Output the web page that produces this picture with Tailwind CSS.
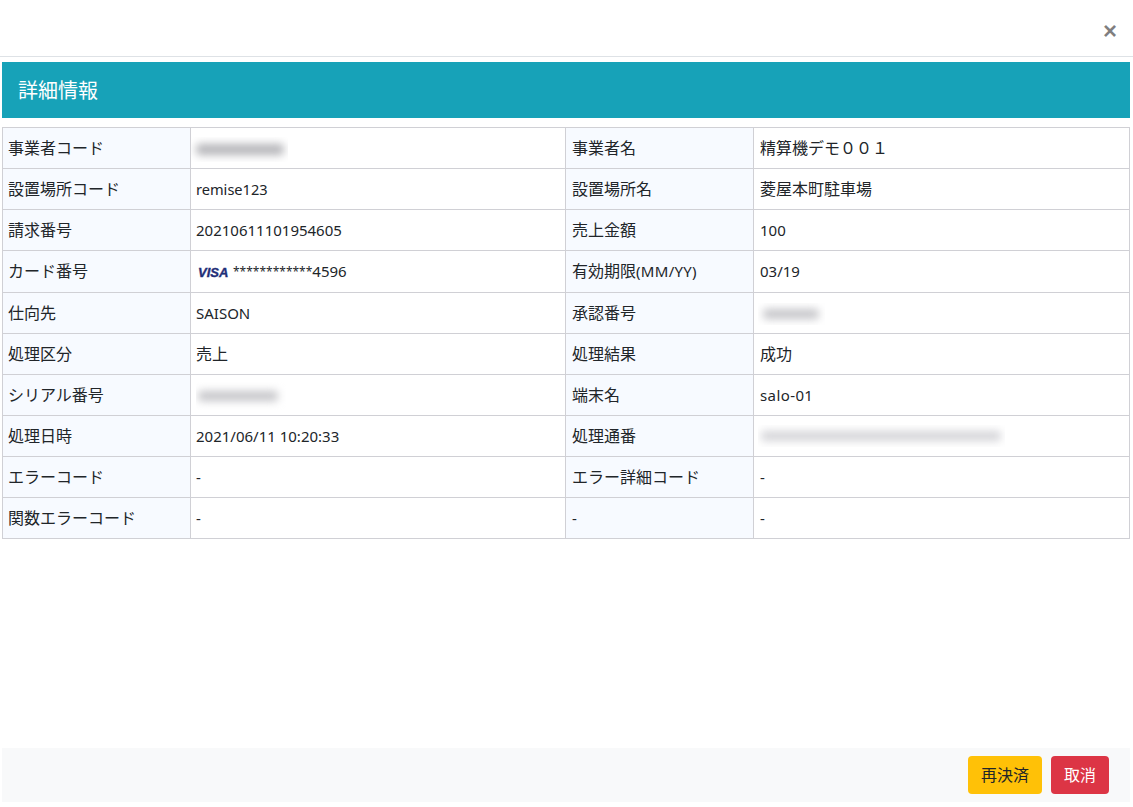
<!DOCTYPE html>
<html lang="ja">
<head>
<meta charset="utf-8">
<title>詳細情報</title>
<script src="https://cdn.jsdelivr.net/npm/@tailwindcss/browser@4"></script>
</head>
<body class="bg-white font-['Noto_Sans','Noto_Sans_CJK_JP',sans-serif] text-[16px] leading-[21px] text-[#212529]">
<div class="h-[807px] w-[1133px] flex flex-col overflow-hidden">
  <header class="h-[57px] shrink-0 border-b border-[#dee2e6] flex items-center justify-end pr-[16px]">
    <button class="text-[24px] leading-none font-bold text-black/50 pt-[6px] font-['Liberation_Sans',sans-serif]">×</button>
  </header>
  <main class="flex-1 pl-[2px] pr-[3px] pt-[5px] flex flex-col">
    <h2 class="h-[56px] bg-[#17a2b8] text-white text-[20px] flex items-center pl-[16px] font-normal">詳細情報</h2>
    <table class="mt-[9px] w-[1127px] table-fixed border-collapse border border-[#d0d0d5]">
      <colgroup>
        <col class="w-[188px]"><col class="w-[375px]"><col class="w-[188px]"><col class="w-[376px]">
      </colgroup>
      <tbody>
        <tr class="h-[41px]">
          <td class="border border-[#d0d0d5] bg-[#f7faff] px-[5px] align-middle">事業者コード</td>
          <td class="border border-[#d0d0d5] px-[5px] align-middle relative">
            <div class="absolute left-0 top-[9px] w-[97px] h-[25px] overflow-hidden bg-white"><div class="mt-[7px] ml-[5px] h-[11px] w-[88px] rounded bg-[#b4b4b8] blur-[4px]"></div></div>&nbsp;
          </td>
          <td class="border border-[#d0d0d5] bg-[#f7faff] pl-[6px] pr-[5px] align-middle">事業者名</td>
          <td class="border border-[#d0d0d5] pl-[6px] pr-[5px] align-middle">精算機デモ００１</td>
        </tr>
        <tr class="h-[41px]">
          <td class="border border-[#d0d0d5] bg-[#f7faff] px-[5px] align-middle">設置場所コード</td>
          <td class="border border-[#d0d0d5] px-[5px] align-middle text-[14.6px]">remise123</td>
          <td class="border border-[#d0d0d5] bg-[#f7faff] pl-[6px] pr-[5px] align-middle">設置場所名</td>
          <td class="border border-[#d0d0d5] pl-[6px] pr-[5px] align-middle">菱屋本町駐車場</td>
        </tr>
        <tr class="h-[41px]">
          <td class="border border-[#d0d0d5] bg-[#f7faff] px-[5px] align-middle">請求番号</td>
          <td class="border border-[#d0d0d5] px-[5px] align-middle text-[15px]">20210611101954605</td>
          <td class="border border-[#d0d0d5] bg-[#f7faff] pl-[6px] pr-[5px] align-middle">売上金額</td>
          <td class="border border-[#d0d0d5] pl-[6px] pr-[5px] align-middle text-[15px]">100</td>
        </tr>
        <tr class="h-[42px]">
          <td class="border border-[#d0d0d5] bg-[#f7faff] px-[5px] align-middle">カード番号</td>
          <td class="border border-[#d0d0d5] px-[5px] align-middle"><span class="inline-flex items-center gap-[5px] ml-[2px]"><span class="font-['Liberation_Sans',sans-serif] italic font-black text-[13px] leading-none text-[#1f2f78] [-webkit-text-stroke:0.4px_#1f2f78] w-[30px] pt-[2px]">VISA</span><span class="text-[15px]"><span class="text-[12px] align-[1px]">************</span>4596</span></span></td>
          <td class="border border-[#d0d0d5] bg-[#f7faff] pl-[6px] pr-[5px] align-middle">有効期限<span class="text-[15px] tracking-[0.3px]">(MM/YY)</span></td>
          <td class="border border-[#d0d0d5] pl-[6px] pr-[5px] align-middle text-[15px]">03/19</td>
        </tr>
        <tr class="h-[41px]">
          <td class="border border-[#d0d0d5] bg-[#f7faff] px-[5px] align-middle">仕向先</td>
          <td class="border border-[#d0d0d5] px-[5px] align-middle text-[15px]">SAISON</td>
          <td class="border border-[#d0d0d5] bg-[#f7faff] pl-[6px] pr-[5px] align-middle">承認番号</td>
          <td class="border border-[#d0d0d5] px-[5px] align-middle relative">
            <div class="absolute left-[4px] top-[10px] w-[67px] h-[22px] overflow-hidden bg-white"><div class="mt-[6px] ml-[5px] h-[10px] w-[56px] rounded bg-[#c4c4c8] blur-[4px]"></div></div>&nbsp;
          </td>
        </tr>
        <tr class="h-[41px]">
          <td class="border border-[#d0d0d5] bg-[#f7faff] px-[5px] align-middle">処理区分</td>
          <td class="border border-[#d0d0d5] px-[5px] align-middle">売上</td>
          <td class="border border-[#d0d0d5] bg-[#f7faff] pl-[6px] pr-[5px] align-middle">処理結果</td>
          <td class="border border-[#d0d0d5] pl-[6px] pr-[5px] align-middle">成功</td>
        </tr>
        <tr class="h-[41px]">
          <td class="border border-[#d0d0d5] bg-[#f7faff] px-[5px] align-middle">シリアル番号</td>
          <td class="border border-[#d0d0d5] px-[5px] align-middle relative">
            <div class="absolute left-[5px] top-[7px] w-[90px] h-[28px] overflow-hidden bg-white"><div class="mt-[9px] ml-[2px] h-[10px] w-[80px] rounded bg-[#c4c4c8] blur-[4px]"></div></div>&nbsp;
          </td>
          <td class="border border-[#d0d0d5] bg-[#f7faff] pl-[6px] pr-[5px] align-middle">端末名</td>
          <td class="border border-[#d0d0d5] pl-[6px] pr-[5px] align-middle text-[15px] tracking-[0.4px]">salo-01</td>
        </tr>
        <tr class="h-[41px]">
          <td class="border border-[#d0d0d5] bg-[#f7faff] px-[5px] align-middle">処理日時</td>
          <td class="border border-[#d0d0d5] px-[5px] align-middle text-[15px]">2021/06/11 10:20:33</td>
          <td class="border border-[#d0d0d5] bg-[#f7faff] pl-[6px] pr-[5px] align-middle">処理通番</td>
          <td class="border border-[#d0d0d5] px-[5px] align-middle relative">
            <div class="absolute left-[4px] top-[9px] w-[247px] h-[22px] overflow-hidden bg-white"><div class="mt-[6px] ml-[3px] h-[10px] w-[240px] rounded bg-[#d4d4d8] blur-[4px]"></div></div>&nbsp;
          </td>
        </tr>
        <tr class="h-[41px]">
          <td class="border border-[#d0d0d5] bg-[#f7faff] px-[5px] align-middle">エラーコード</td>
          <td class="border border-[#d0d0d5] px-[5px] align-middle text-[15px]">-</td>
          <td class="border border-[#d0d0d5] bg-[#f7faff] pl-[6px] pr-[5px] align-middle">エラー詳細コード</td>
          <td class="border border-[#d0d0d5] pl-[6px] pr-[5px] align-middle text-[15px]">-</td>
        </tr>
        <tr class="h-[41px]">
          <td class="border border-[#d0d0d5] bg-[#f7faff] px-[5px] align-middle">関数エラーコード</td>
          <td class="border border-[#d0d0d5] px-[5px] align-middle text-[15px]">-</td>
          <td class="border border-[#d0d0d5] bg-[#f7faff] pl-[6px] pr-[5px] align-middle text-[15px]">-</td>
          <td class="border border-[#d0d0d5] pl-[6px] pr-[5px] align-middle text-[15px]">-</td>
        </tr>
      </tbody>
    </table>
  </main>
  <footer class="ml-[2px] mr-[3px] mb-[5px] h-[54px] shrink-0 bg-[#f8f9fa] flex items-center justify-end gap-[9px] pr-[21px]">
    <button class="h-[38px] w-[74px] rounded-[4px] bg-[#ffc107] text-[#212529]">再決済</button>
    <button class="h-[38px] w-[58px] rounded-[4px] bg-[#dc3545] text-white">取消</button>
  </footer>
</div>
</body>
</html>
